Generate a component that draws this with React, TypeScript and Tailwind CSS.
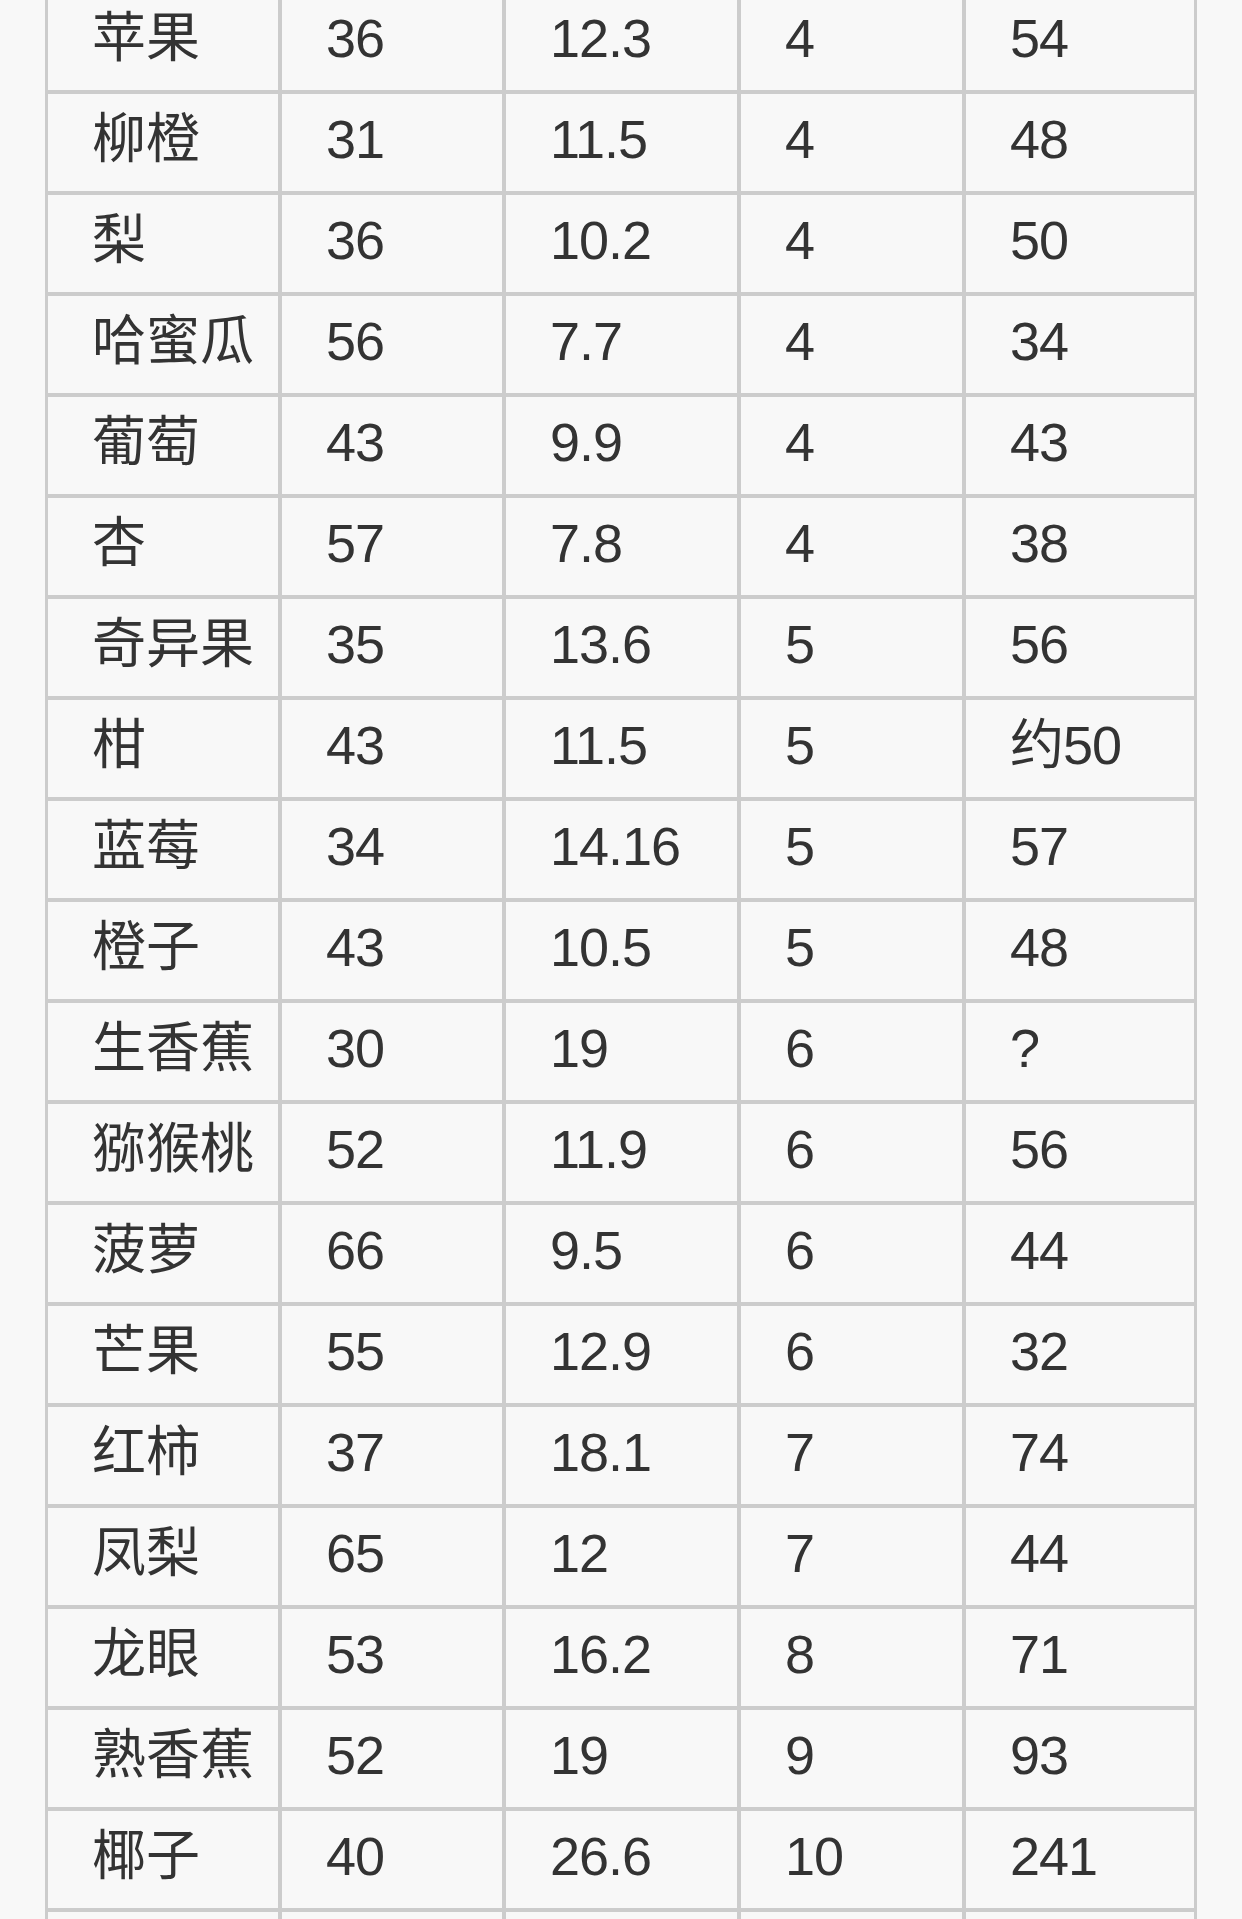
import React from "react";

const rows: string[][] = [
  ["苹果", "36", "12.3", "4", "54"],
  ["柳橙", "31", "11.5", "4", "48"],
  ["梨", "36", "10.2", "4", "50"],
  ["哈蜜瓜", "56", "7.7", "4", "34"],
  ["葡萄", "43", "9.9", "4", "43"],
  ["杏", "57", "7.8", "4", "38"],
  ["奇异果", "35", "13.6", "5", "56"],
  ["柑", "43", "11.5", "5", "约50"],
  ["蓝莓", "34", "14.16", "5", "57"],
  ["橙子", "43", "10.5", "5", "48"],
  ["生香蕉", "30", "19", "6", "?"],
  ["猕猴桃", "52", "11.9", "6", "56"],
  ["菠萝", "66", "9.5", "6", "44"],
  ["芒果", "55", "12.9", "6", "32"],
  ["红柿", "37", "18.1", "7", "74"],
  ["凤梨", "65", "12", "7", "44"],
  ["龙眼", "53", "16.2", "8", "71"],
  ["熟香蕉", "52", "19", "9", "93"],
  ["椰子", "40", "26.6", "10", "241"],
  ["", "", "", "", ""],
];

export default function App() {
  return (
    <div
      className="w-[1242px] h-[1919px] overflow-hidden bg-[#f8f8f8] text-[#333333]"
      style={{ fontFamily: '"Liberation Sans", "Noto Sans CJK SC", sans-serif' }}
    >
      <div className="ml-[45px] mt-[-11px] w-[1152px] grid grid-cols-[230px_220px_231px_221px_228px] gap-[4px] bg-[#cccccc] p-[3px] pt-[4px]">
        {rows.map((r, i) =>
          r.map((c, j) => (
            <div
              key={`${i}-${j}`}
              className={
                j === 0
                  ? "h-[97px] bg-[#f8f8f8] flex items-center pl-[44px] pb-[8px] text-[54px] leading-none whitespace-nowrap"
                  : "h-[97px] bg-[#f8f8f8] flex items-center pl-[44px] pb-[8px] text-[54px] leading-none whitespace-nowrap tracking-[-1px]"
              }
            >
              {c}
            </div>
          ))
        )}
      </div>
    </div>
  );
}
